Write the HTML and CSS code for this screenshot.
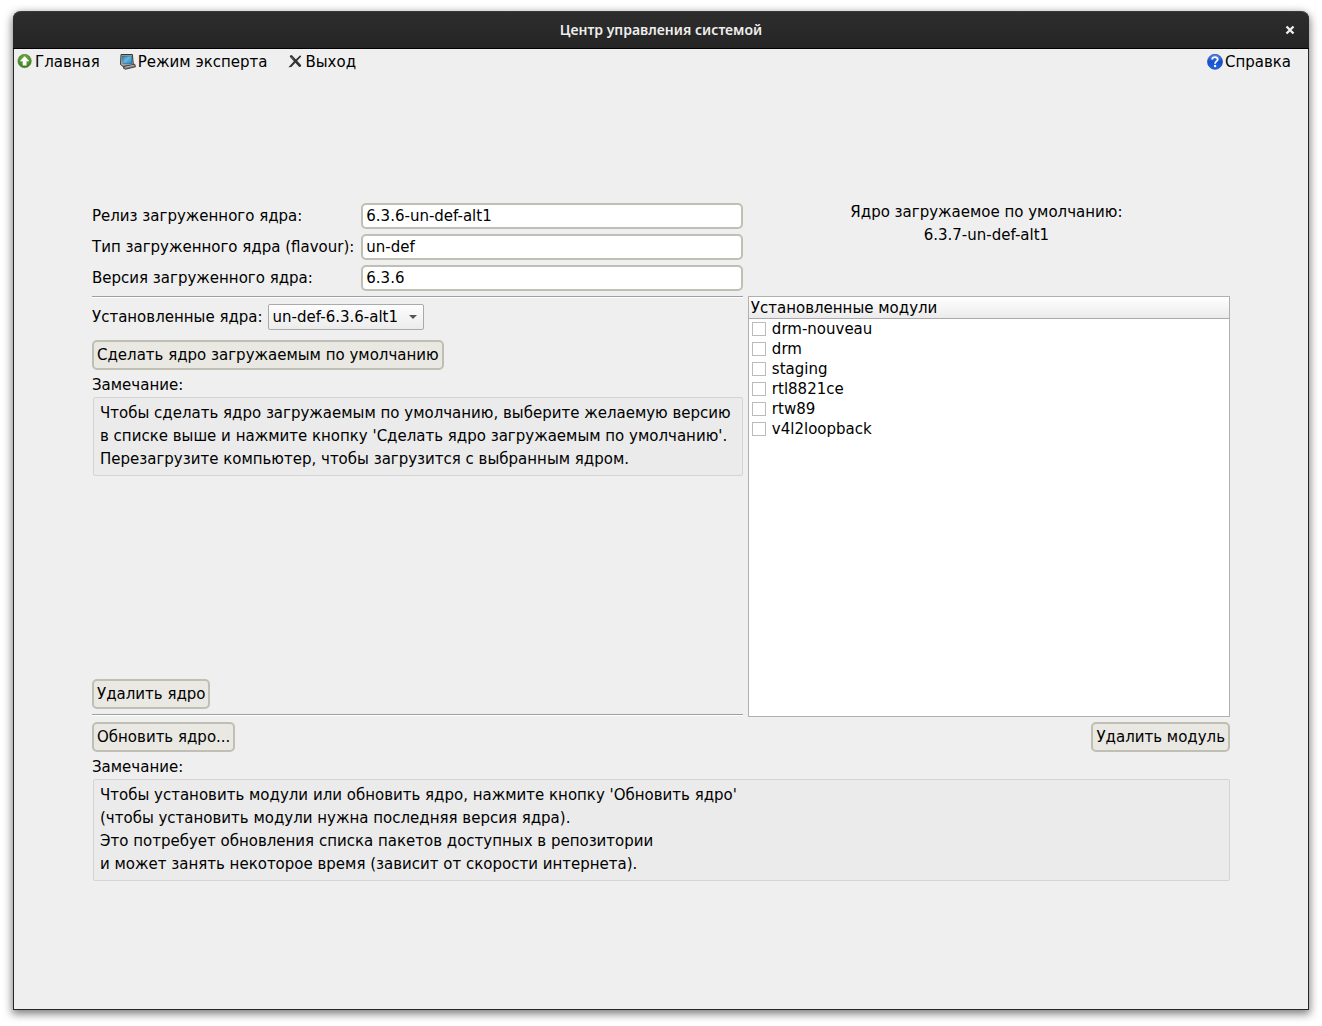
FILE: index.html
```html
<!DOCTYPE html>
<html lang="ru">
<head>
<meta charset="utf-8">
<meta name="viewport" content="width=device-width, initial-scale=1">
<title>Центр управления системой</title>
<link rel="stylesheet" href="styles.css">
</head>
<body>
<div class="window">
  <header class="titlebar">
    <h1 class="title">Центр управления системой</h1>
    <button class="close" type="button" aria-label="Закрыть">
      <svg width="10" height="10" viewBox="0 0 10 10"><path d="M1.5 1.5L8.5 8.5M8.5 1.5L1.5 8.5" stroke="#eeeeec" stroke-width="2.4"/></svg>
    </button>
  </header>

  <nav class="toolbar">
    <button class="tool" type="button">
      <svg class="icon" viewBox="0 0 16 16">
        <defs><radialGradient id="green" cx=".5" cy=".35" r=".65"><stop offset="0" stop-color="#7fb84e"/><stop offset="1" stop-color="#37771a"/></radialGradient></defs>
        <circle cx="7.6" cy="7" r="6.7" fill="url(#green)" stroke="#4c8a2c" stroke-width=".6"/>
        <path d="M7.6 2.2L12.4 7.3H9.5V11.4H5.7V7.3H2.8Z" fill="#fff"/>
      </svg>Главная</button>
    <button class="tool" type="button">
      <svg class="icon" viewBox="0 0 16 16">
        <defs><linearGradient id="screen" x1="0" y1="0" x2="1" y2="1"><stop offset="0" stop-color="#2a7db2"/><stop offset=".45" stop-color="#67b7df"/><stop offset="1" stop-color="#1b86c0"/></linearGradient></defs>
        <path d="M1 .5H12.4L13.4 11.3L3 12.4L.5 10.5Z" fill="#a9adaa" stroke="#343836"/>
        <path d="M2.4 2H11.3L12 9.7H3Z" fill="url(#screen)" stroke="#29546e" stroke-width=".5"/>
        <path d="M3.5 12.6L14.8 10.2L15.5 12.8L5.6 15.2L3.6 14.4Z" fill="#777c79" stroke="#303331" stroke-width=".8"/>
        <path d="M5.2 13.2L14 11.3" stroke="#c6c9c7" stroke-width=".8"/>
      </svg>Режим эксперта</button>
    <button class="tool" type="button">
      <svg class="icon" viewBox="0 0 16 16">
        <path d="M4.2 2.4L12.8 11.6" stroke="#303432" stroke-width="2.8" stroke-linecap="round"/>
        <path d="M13.2 1.2L14.2 2.4L8.6 8.4L4.4 13L1.4 13.2L6.9 7.2Z" fill="#303432"/>
        <path d="M4.2 2.8L6.7 5.5" stroke="#777b79" stroke-width=".8"/>
      </svg>Выход</button>
    <button class="tool tool-help" type="button">
      <svg class="icon" viewBox="0 0 16 16">
        <defs><linearGradient id="blue" x1="0" y1="0" x2="0" y2="1"><stop offset="0" stop-color="#5c8ce4"/><stop offset=".5" stop-color="#1750cb"/><stop offset="1" stop-color="#1d65ed"/></linearGradient></defs>
        <circle cx="8" cy="7.8" r="7.5" fill="url(#blue)" stroke="#1546a8" stroke-width=".7"/>
        <path d="M5.2 5.5C5.3 2.4 10.8 2.5 10.7 5.5C10.7 7.1 8.1 7.3 8.1 9.7" fill="none" stroke="#fff" stroke-width="1.8"/>
        <circle cx="8.1" cy="12" r="1.2" fill="#fff"/>
      </svg>Справка</button>
  </nav>

  <main class="content">
    <div class="grid">
      <form class="fields">
        <label for="release">Релиз загруженного ядра:</label>
        <input class="field" id="release" type="text" value="6.3.6-un-def-alt1" readonly>
        <label for="flavour">Тип загруженного ядра (flavour):</label>
        <input class="field" id="flavour" type="text" value="un-def" readonly>
        <label for="version">Версия загруженного ядра:</label>
        <input class="field" id="version" type="text" value="6.3.6" readonly>
      </form>

      <div class="default-kernel">
        <span>Ядро загружаемое по умолчанию:</span>
        <span>6.3.7-un-def-alt1</span>
      </div>

      <section class="kernels">
        <hr class="rule">
        <div class="choose">
          <label for="kernel">Установленные ядра:</label>
          <span class="combo">
            <select class="select" id="kernel"><option>un-def-6.3.6-alt1</option></select>
          </span>
        </div>
        <button class="button make-default" type="button">Сделать ядро загружаемым по умолчанию</button>
        <p class="caption">Замечание:</p>
        <p class="note">Чтобы сделать ядро загружаемым по умолчанию, выберите желаемую версию<br>в списке выше и нажмите кнопку 'Сделать ядро загружаемым по умолчанию'.<br>Перезагрузите компьютер, чтобы загрузится с выбранным ядром.</p>
        <button class="button remove-kernel" type="button">Удалить ядро</button>
        <hr class="rule">
      </section>

      <div class="modules">
        <table class="module-table">
          <thead><tr><th scope="col">Установленные модули</th></tr></thead>
          <tbody>
            <tr><td><label class="module"><input class="check" type="checkbox">drm-nouveau</label></td></tr>
            <tr><td><label class="module"><input class="check" type="checkbox">drm</label></td></tr>
            <tr><td><label class="module"><input class="check" type="checkbox">staging</label></td></tr>
            <tr><td><label class="module"><input class="check" type="checkbox">rtl8821ce</label></td></tr>
            <tr><td><label class="module"><input class="check" type="checkbox">rtw89</label></td></tr>
            <tr><td><label class="module"><input class="check" type="checkbox">v4l2loopback</label></td></tr>
          </tbody>
        </table>
      </div>
    </div>

    <div class="actions">
      <button class="button" type="button">Обновить ядро...</button>
      <button class="button" type="button">Удалить модуль</button>
    </div>
    <p class="caption">Замечание:</p>
    <p class="note">Чтобы установить модули или обновить ядро, нажмите кнопку 'Обновить ядро'<br>(чтобы установить модули нужна последняя версия ядра).<br>Это потребует обновления списка пакетов доступных в репозитории<br>и может занять некоторое время (зависит от скорости интернета).</p>
  </main>
</div>
</body>
</html>
```
FILE: styles.css
```css
* {
  box-sizing: border-box;
}

body {
  margin: 0;
  padding: 11px 13px 16px;
  min-height: 100vh;
  display: flex;
  background: #fff;
  color: #000;
  font: 15px/20px "DejaVu Sans", sans-serif;
}

button,
input,
select {
  font: inherit;
  color: inherit;
}

p,
h1 {
  margin: 0;
}

.window {
  flex: 1;
  display: flex;
  flex-direction: column;
  border: 1px solid #262626;
  border-top: 0;
  border-radius: 8px 8px 0 0;
  background: #efefef;
  box-shadow: 0 3px 9px 1px rgba(0, 0, 0, .5);
}

.titlebar {
  display: grid;
  grid-template-columns: 1fr auto 1fr;
  align-items: center;
  height: 38px;
  margin: 0 -1px;
  padding: 0 12px;
  border-top: 1px solid #3a3a3a;
  border-bottom: 1px solid #000;
  border-radius: 8px 8px 0 0;
  background: linear-gradient(#2d2d2d, #252525);
}

.title {
  grid-column: 2;
  color: #eeeeec;
  font: 600 14px/20px "Noto Sans", sans-serif;
}

.close {
  justify-self: end;
  display: grid;
  place-items: center;
  width: 14px;
  height: 14px;
  padding: 0;
  border: 0;
  background: none;
}

.toolbar {
  display: flex;
  gap: 20px;
  padding: 3px 17px 4px 3px;
}

.tool {
  display: flex;
  align-items: center;
  gap: 2px;
  padding: 0;
  border: 0;
  background: none;
}

.tool-help {
  margin-left: auto;
}

.icon {
  width: 16px;
  height: 16px;
}

.content {
  flex: 1;
  display: flex;
  flex-direction: column;
  justify-content: center;
  padding: 0 78px 2px;
}

.grid {
  display: grid;
  grid-template-columns: minmax(0, 27fr) minmax(0, 20fr);
  gap: 5px;
}

.fields {
  display: grid;
  grid-template-columns: auto 1fr;
  align-items: center;
  gap: 5px 7px;
}

.field {
  width: 100%;
  height: 26px;
  padding: 0 3px;
  border: 2px solid #bfbfb3;
  border-radius: 5px;
  background: #fff;
}

.default-kernel {
  display: flex;
  flex-direction: column;
  align-items: center;
  gap: 5px;
  padding-right: 5px;
  line-height: 18px;
}

.kernels {
  display: flex;
  flex-direction: column;
  align-items: stretch;
  min-height: 421px;
  padding-bottom: 1px;
}

.rule {
  width: 100%;
  height: 2px;
  margin: 0;
  border: 0;
  border-top: 1px solid #9f9f9f;
  background: #fff;
}

.choose {
  display: flex;
  align-items: center;
  gap: 5px;
  margin: 6px 0 10px;
}

.combo {
  position: relative;
}

.combo::after {
  content: "";
  position: absolute;
  top: 11px;
  right: 7px;
  border: 4px solid transparent;
  border-top-color: #555;
  border-bottom: 0;
  pointer-events: none;
}

.select {
  display: block;
  height: 26px;
  padding: 0 24px 0 4px;
  appearance: none;
  border: 1px solid #aaa;
  border-radius: 2px;
  background: linear-gradient(#fdfdfd, #ececec);
}

.button {
  height: 30px;
  padding: 0 3px;
  border: 2px solid #bfbfb3;
  border-radius: 5px;
  background: #e9e8e2;
}

.make-default {
  align-self: flex-start;
}

.remove-kernel {
  align-self: flex-start;
  margin: auto 0 5px;
}

.caption {
  margin: 5px 0 2px;
}

.note {
  margin-left: 1px;
  padding: 4px 6px;
  border: 1px solid #d4d4d4;
  border-radius: 2px;
  background: #ebebeb;
  line-height: 23px;
}

.modules {
  border: 1px solid #b0b0b0;
  background: #fff;
}

.module-table {
  width: 100%;
  border-collapse: collapse;
}

.module-table th {
  height: 22px;
  padding: 1px 2px 0;
  border-bottom: 1px solid #aaa;
  background: linear-gradient(#fff, #ebebeb);
  font-weight: normal;
  text-align: left;
}

.module-table td {
  padding: 0 3px;
}

.module {
  display: flex;
  align-items: center;
  gap: 6px;
}

.check {
  width: 14px;
  height: 14px;
  margin: 0;
  appearance: none;
  border: 1px solid #bbb;
  background: #fff;
}

.check:checked {
  background: #5a5a5a;
  box-shadow: inset 0 0 0 2px #fff;
}

.actions {
  display: flex;
  justify-content: space-between;
  margin-top: 5px;
}
```
